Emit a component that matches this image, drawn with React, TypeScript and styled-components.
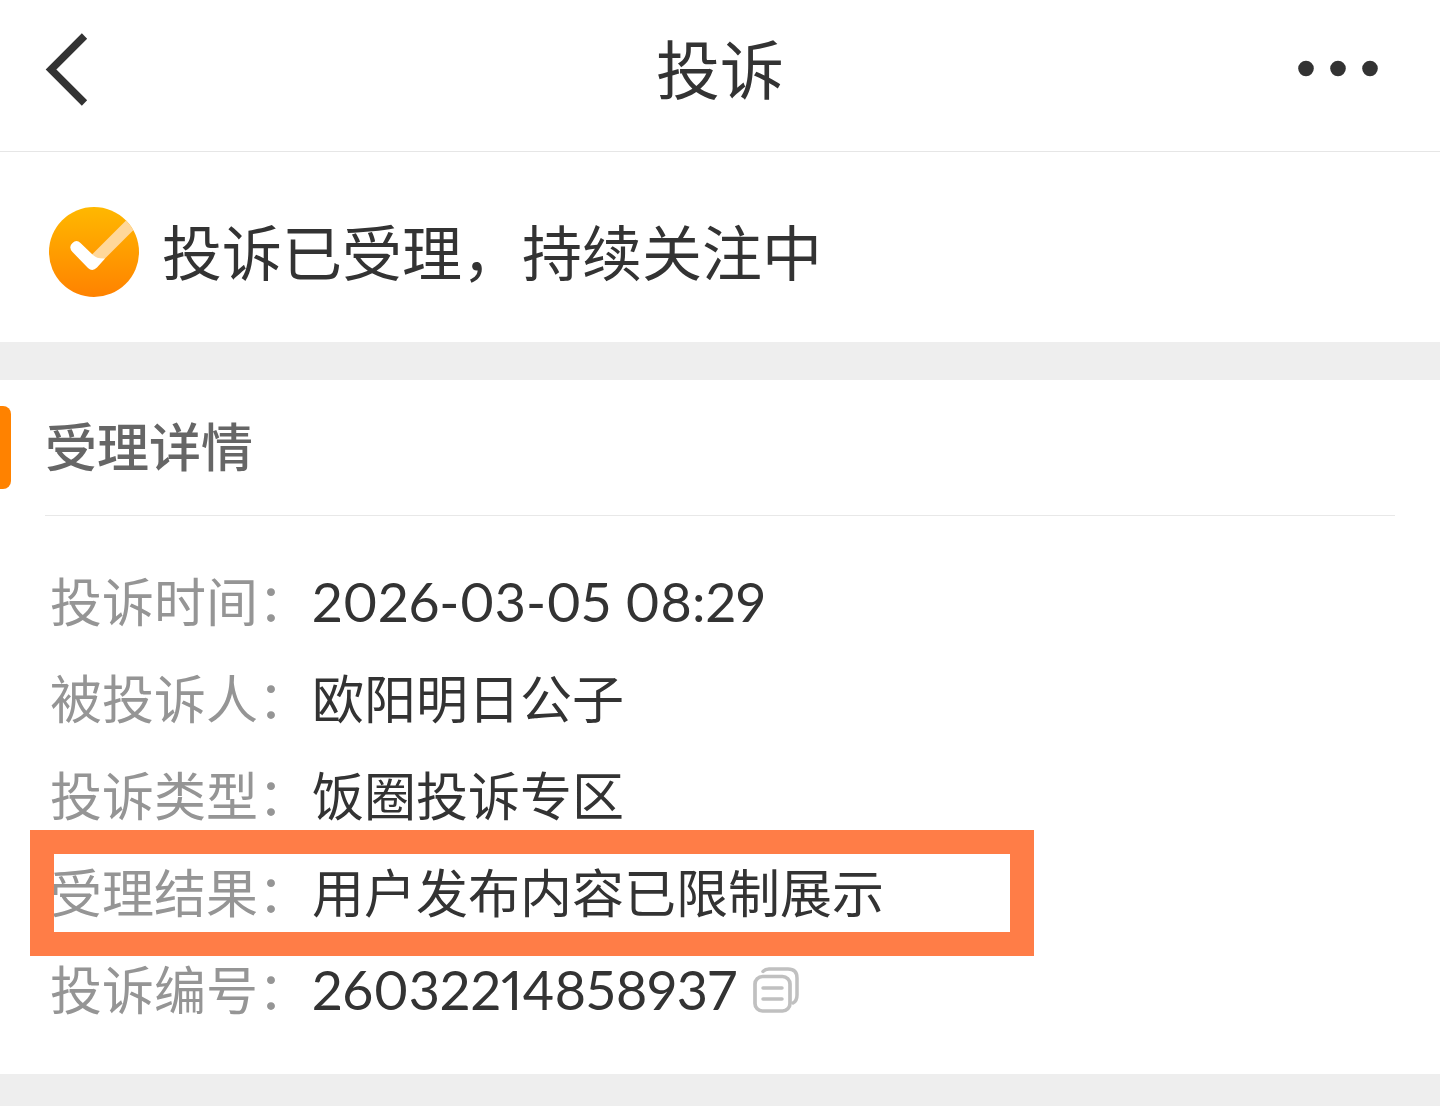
import React from "react";
import styled, { createGlobalStyle } from "styled-components";

const GlobalStyle = createGlobalStyle`
  *, *::before, *::after { box-sizing: border-box; }
  body {
    margin: 0;
    background: #eeeeee;
    color: #333333;
    font-family: "Noto Sans CJK SC", "Noto Sans", sans-serif;
  }
`;

const Page = styled.div`
  display: flex;
  flex-direction: column;
`;

const Header = styled.header`
  display: grid;
  grid-template-columns: 1fr auto 1fr;
  align-items: center;
  padding: 22px 44px 35px;
  background: #ffffff;
  border-bottom: 1px solid #e6e6e6;
`;

const HeaderTitle = styled.h1`
  margin: 0;
  padding-bottom: 6px;
  font-size: 64px;
  line-height: 88px;
  font-weight: 400;
`;

const IconButton = styled.button<{ $align?: "start" | "end" }>`
  display: flex;
  justify-self: ${(p) => p.$align ?? "start"};
  padding: ${(p) => (p.$align === "end" ? "0 16px" : "0")};
  border: 0;
  background: none;
  color: inherit;
  cursor: pointer;
`;

const Status = styled.section`
  display: flex;
  align-items: center;
  gap: 22px;
  padding: 55px 48px 45px;
  background: #ffffff;
`;

const StatusText = styled.p`
  margin: 0;
  padding-bottom: 4px;
  font-size: 60px;
  line-height: 86px;
`;

const Details = styled.section`
  margin-top: 38px;
  padding: 0 45px 35px;
  background: #ffffff;
`;

const SectionTitle = styled.h2`
  position: relative;
  margin: 0;
  padding: 23px 0 29px;
  border-bottom: 1px solid #e8e8e8;
  color: #666666;
  font-size: 52px;
  line-height: 83px;
  font-weight: 500;

  &::before {
    content: "";
    position: absolute;
    left: -45px;
    top: 26px;
    width: 11px;
    height: 83px;
    border-radius: 0 8px 8px 0;
    background: #ff8200;
  }
`;

const List = styled.dl`
  margin: 0;
  padding: 38px 5px 0;
`;

const Row = styled.div`
  position: relative;
  display: flex;
  align-items: flex-start;
  height: 97px;
  font-size: 52px;
  line-height: 92px;
`;

const Label = styled.dt`
  flex: 0 0 262px;
  color: #959595;
`;

const Value = styled.dd<{ $numeric?: boolean }>`
  display: flex;
  align-items: center;
  gap: 16px;
  margin: 0;
  white-space: nowrap;
  ${(p) =>
    p.$numeric &&
    `
    font-family: Lato, "Noto Sans CJK SC", sans-serif;
    font-size: 54px;
    font-variant-numeric: proportional-nums;
    line-height: 96px;
  `}
`;

const Highlight = styled.span`
  position: absolute;
  left: -20px;
  top: -15px;
  width: 1004px;
  max-width: 100vw;
  height: 126px;
  border: 24px solid #ff7d47;
  pointer-events: none;
`;

const BackIcon = () => (
  <svg width="46" height="74" viewBox="0 0 46 74" fill="none" aria-hidden="true">
    <path d="M40.500 4L7 37.500L40.500 71" stroke="currentColor" strokeWidth="7.500" />
  </svg>
);

const MoreIcon = () => (
  <svg width="84" height="20" viewBox="0 0 84 20" fill="currentColor" aria-hidden="true">
    <circle cx="10" cy="9.500" r="7.800" />
    <circle cx="42" cy="9.500" r="7.800" />
    <circle cx="74" cy="9.500" r="7.800" />
  </svg>
);

const AcceptedIcon = () => (
  <svg width="92" height="90" viewBox="0 0 92 90" fill="none" aria-hidden="true">
    <defs>
      <linearGradient id="badge" x1="0" y1="0" x2="0" y2="1">
        <stop offset="0" stopColor="#ffb800" />
        <stop offset="1" stopColor="#ff8200" />
      </linearGradient>
      <clipPath id="disc">
        <circle cx="46" cy="45" r="45" />
      </clipPath>
    </defs>
    <circle cx="46" cy="45" r="45" fill="url(#badge)" />
    <path d="M46 54L90 10" stroke="#ffd79a" strokeWidth="12" clipPath="url(#disc)" />
    <path
      d="M24.500 36Q28.500 32 32.500 36L45 48Q49 52 57 51.500L49 60.500Q44.500 65 40 61L24.500 45Q20 40 24.500 36Z"
      fill="#ffffff"
    />
  </svg>
);

const CopyIcon = () => (
  <svg width="46" height="46" viewBox="0 0 46 46" fill="none" stroke="#c0c0c0" strokeLinecap="round" aria-hidden="true">
    <path d="M10 4.500Q12 2 16 2H35Q44 2 44 11V28Q44 34 40 36" strokeWidth="3.500" />
    <rect x="2" y="9.500" width="35" height="34.500" rx="7.500" strokeWidth="3.700" />
    <path d="M10 21H29M10 32H29" strokeWidth="3.500" />
  </svg>
);

type Detail = {
  label: string;
  value: string;
  numeric?: boolean;
  highlighted?: boolean;
  copyable?: boolean;
};

const details: Detail[] = [
  { label: "投诉时间", value: "2026-03-05 08:29", numeric: true },
  { label: "被投诉人", value: "欧阳明日公子" },
  { label: "投诉类型", value: "饭圈投诉专区" },
  { label: "受理结果", value: "用户发布内容已限制展示", highlighted: true },
  { label: "投诉编号", value: "26032214858937", numeric: true, copyable: true },
];

export default function App() {
  return (
    <Page lang="zh-CN">
      <GlobalStyle />
      <Header>
        <IconButton type="button" aria-label="返回">
          <BackIcon />
        </IconButton>
        <HeaderTitle>投诉</HeaderTitle>
        <IconButton type="button" aria-label="更多" $align="end">
          <MoreIcon />
        </IconButton>
      </Header>
      <main>
        <Status>
          <AcceptedIcon />
          <StatusText>投诉已受理，持续关注中</StatusText>
        </Status>
        <Details>
          <SectionTitle>受理详情</SectionTitle>
          <List>
            {details.map((d) => (
              <Row key={d.label}>
                <Label>{d.label}：</Label>
                <Value $numeric={d.numeric}>
                  {d.value}
                  {d.copyable && (
                    <IconButton
                      type="button"
                      aria-label="复制投诉编号"
                      onClick={() => navigator.clipboard?.writeText(d.value)}
                    >
                      <CopyIcon />
                    </IconButton>
                  )}
                </Value>
                {d.highlighted && <Highlight />}
              </Row>
            ))}
          </List>
        </Details>
      </main>
    </Page>
  );
}
